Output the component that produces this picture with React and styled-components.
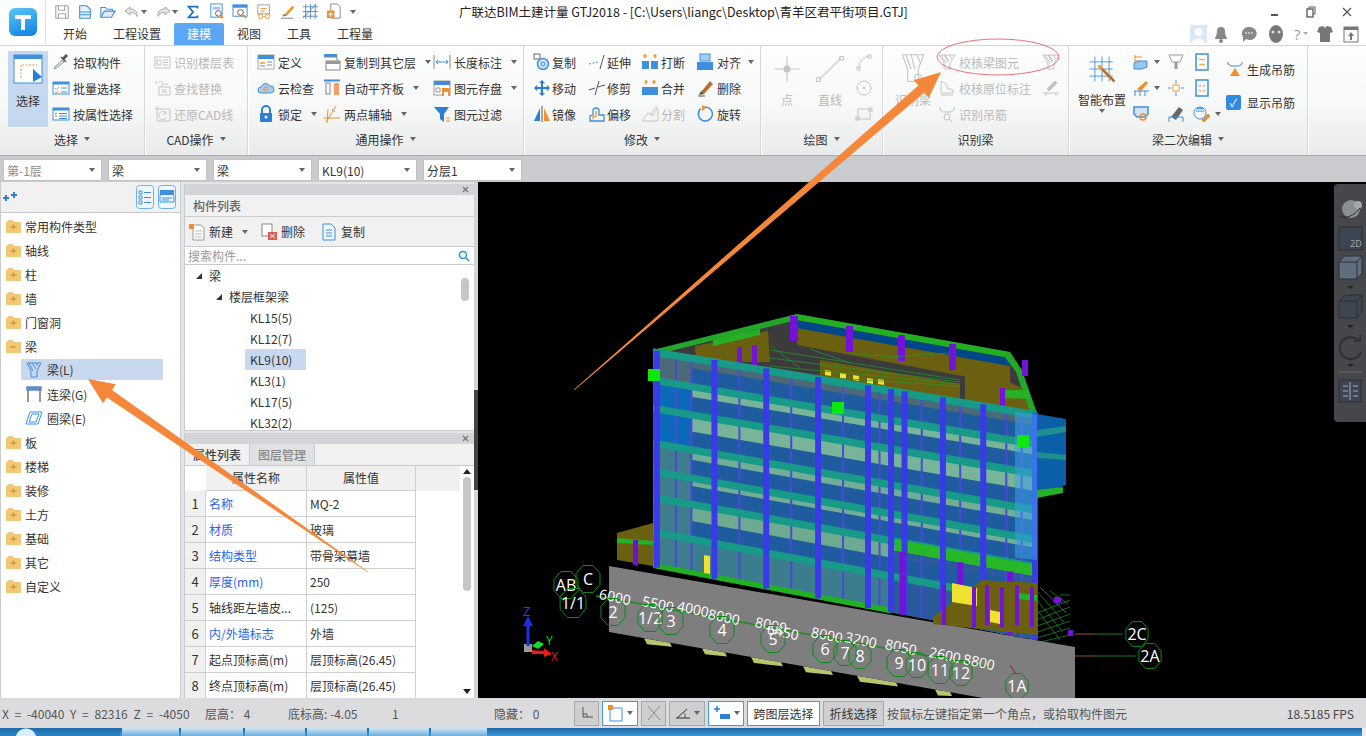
import React from 'react';
import styled, { createGlobalStyle } from 'styled-components';

const GlobalStyle = createGlobalStyle`
  html, body { margin: 0; padding: 0; height: 100%; overflow: hidden; }
  body { font-family: "Noto Sans CJK SC", "Liberation Sans", sans-serif; font-size: 12px; color: #333; }
  * { box-sizing: border-box; }
`;

const B = '#3f8fdc';
const O = '#f0902c';
const G = '#a9a9a9';
const L = '#c4c4c4';

// drawings for the small toolbar icons, all on an 18x18 grid
const icons = {
  save: <g fill="none" stroke={G} strokeWidth="1.3"><path d="M2 2h13l1 1v13H2z" /><path d="M5 2v5h7V2M5 16v-5h8v5" /></g>,
  page: <g fill="none" stroke={B} strokeWidth="1.2"><path d="M3 2h8l4 4v10H3z" fill="#e8f2fc" /><path d="M3 9h12M3 12h12" /></g>,
  open: <g fill="none" stroke={B} strokeWidth="1.2"><path d="M1 15V4h5l2 2h6v3" /><path d="M1 15l4-7h12l-4 7z" fill="#dcecfb" /></g>,
  undo: <path d="M7 4L2 8l5 4V9.500c4 0 6 1 7 4 .6-5-2-7.500-7-7.500z" fill="#e6e6e6" stroke={G} />,
  redo: <path d="M11 4l5 4-5 4V9.500c-4 0-6 1-7 4-.6-5 2-7.500 7-7.500z" fill="#e6e6e6" stroke={G} />,
  sigma: <path d="M14 5V3H4l5 6-5 6h10v-2" fill="none" stroke="#1c74bb" strokeWidth="2" />,
  calc: <g><rect x="3" y="1" width="12" height="14" fill="none" stroke={B} /><path d="M5 4h8v3H5z" fill={B} opacity=".5" /><circle cx="11" cy="11" r="3" fill="#fff" stroke="#555" /><path d="M13 13l3 3" stroke={O} strokeWidth="2" /></g>,
  view: <g><rect x="1" y="2" width="15" height="12" fill="#fff" stroke={B} /><path d="M1 2h15v3H1z" fill={B} /><circle cx="9" cy="10" r="3" fill="none" stroke="#555" /><path d="M11 12l4 4" stroke={O} strokeWidth="2" /></g>,
  glasses: <g fill="none" stroke={O}><rect x="2" y="1" width="13" height="10" stroke="#999" /><circle cx="5" cy="14" r="2.500" /><circle cx="13" cy="14" r="2.500" /><path d="M7.500 14h3M5 5h7M5 8h5" /></g>,
  brush: <g><path d="M7 11l8-9 2 2-8 9z" fill={O} /><path d="M2 16h14" stroke="#777" /><path d="M4 14c0-2 1-3 3-3l2 2c-1 1-3 1-5 1z" fill="#888" /></g>,
  grid: <path d="M1 4h16M1 9h16M1 14h16M4 1v16M9 1v16M14 1v16M1 16L15 1" fill="none" stroke="#5c8cbc" />,
  newdoc: <g><path d="M5 1h7l3 3v12H5z" fill="#fff" stroke="#888" /><rect x="1" y="8" width="8" height="8" fill={O} /><path d="M5 9.500v5M2.500 12h5" stroke="#fff" /></g>,
  newrow: <g><path d="M5 2h8l3 3v12H5z" fill="#fff" stroke="#999" /><path d="M7 8h7M7 11h7M7 14h7" stroke="#bbb" /><rect x="1" y="1" width="5" height="5" fill={O} /></g>,
  pick: <g><path d="M3 16l-1-1 8-8 2 2z" fill="#ddd" stroke="#999" /><path d="M10 5l2 2 4-4-2-2z" fill="#555" /><path d="M9 4l5 5" stroke="#555" strokeWidth="1.500" /></g>,
  batch: <g><rect x="1" y="3" width="16" height="12" fill="#fff" stroke={B} /><path d="M1 3h16v2.500H1z" fill={B} /><path d="M3 9l1.500 1.500L7 8M3 13l1.500 1 2-2" fill="none" stroke={O} /><path d="M9 9h6M9 13h6" stroke={B} /></g>,
  attr: <g><rect x="1" y="3" width="16" height="12" fill="#fff" stroke={B} /><path d="M1 3h16v2.500H1z" fill={B} /><path d="M7 8.500h8M7 11h8M7 13.500h8" stroke={B} /><path d="M3 8.500h2M3 11h2" stroke="#888" /></g>,
  layerTable: <g fill="none" stroke={L}><rect x="1" y="4" width="15" height="11" /><path d="M3 7h4v5H3zM9 7h5M9 9.500h5M9 12h5" /></g>,
  replace: <g fill="none" stroke={L}><path d="M2 3h7M2 3v3" strokeDasharray="2 1" /><rect x="5" y="8" width="11" height="8" /><path d="M8 8V5h6M8 11h5M8 13h5" /></g>,
  restore: <g fill="none" stroke={L}><path d="M3 1v15h13M1 4h15v12" /><path d="M12 8a4 4 0 1 0 0 5M12 6v3H9" /></g>,
  define: <g><rect x="1" y="2" width="16" height="14" fill="#fff" stroke="#aaa" /><path d="M1 2h16v4H1z" fill={B} /><path d="M3 9h5v2H3z" fill="#f3b44f" /><path d="M10 9h5M10 12h5M3 13h5" stroke="#888" /></g>,
  cloud: <g><path d="M4 14a3 3 0 0 1 0-6 5 5 0 0 1 9-1 3.500 3.500 0 0 1 1 7z" fill="#a9cdf0" stroke={B} /><circle cx="9" cy="10" r="2" fill="none" stroke={O} /></g>,
  lock: <g><path d="M5 8V5a4 4 0 0 1 8 0v3" fill="none" stroke="#2a7fd4" strokeWidth="2" /><rect x="3" y="8" width="12" height="9" rx="1" fill="#2a7fd4" /><circle cx="9" cy="12" r="1.500" fill="#fff" /></g>,
  copyLayer: <g><path d="M1 1h13v3H1z" fill={B} /><path d="M1 4h13v5" fill="none" stroke="#888" /><rect x="3" y="8" width="14" height="9" fill="#fff" stroke="#888" /><path d="M3 8h14v3H3z" fill="#999" /></g>,
  align: <g><path d="M1 1.500h16" stroke={B} strokeWidth="2" /><rect x="3" y="4" width="4" height="11" fill="none" stroke="#888" /><rect x="11" y="4" width="5" height="12" fill="#f59d6a" /></g>,
  twoPoint: <path d="M1 13h16M5 4l-1 14M13 1L3 17M9 4l3 3" fill="none" stroke={O} />,
  length: <g fill="none" stroke={B}><path d="M1 2v14M17 2v14" stroke="#888" /><path d="M3 9h12M5 7L3 9l2 2M13 7l2 2-2 2" /></g>,
  saveEl: <g><rect x="1" y="2" width="16" height="14" fill="#fff" stroke="#999" /><path d="M1 2h16v4H1z" fill={B} /><rect x="9" y="9" width="8" height="8" fill={O} /><rect x="11" y="13" width="4" height="4" fill="#fff" /><path d="M3 9h4v4H3z" fill="none" stroke="#999" /></g>,
  filter: <g><path d="M1 2h15l-5 7v8l-4-3V9z" fill="#2a7fd4" /><path d="M13 13h4M13 16h4" stroke={O} /></g>,
  copy: <g><rect x="1" y="1" width="6" height="5" fill="none" stroke="#666" /><circle cx="10" cy="11" r="5.500" fill="#cfe4f8" stroke={B} strokeWidth="1.500" /><circle cx="10" cy="11" r="2" fill="none" stroke={B} /></g>,
  extend: <g fill="none" stroke={B}><path d="M1 11l9-2" strokeDasharray="2 1.500" /><path d="M12 16l4-14" stroke="#555" /></g>,
  breakIt: <g><path d="M4 1v4M14 1v4" stroke={O} strokeWidth="1.500" /><path d="M2 3h4M12 3h4" stroke={O} /><rect x="1" y="8" width="7" height="8" fill={B} /><rect x="10" y="8" width="7" height="8" fill={B} /></g>,
  alignR: <g><rect x="4" y="1" width="10" height="7" fill="#a9cdf0" stroke={B} /><rect x="1" y="9" width="16" height="8" fill={B} /></g>,
  move: <path d="M9 1l3 3h-2v4h4V6l3 3-3 3v-2h-4v4h2l-3 3-3-3h2v-4H4v2L1 9l3-3v2h4V4H6z" fill="#2a7fd4" />,
  trim: <path d="M1 11l6-2M10 8l7-2M11 2L7 16" fill="none" stroke="#555" />,
  merge: <g><path d="M5 1v4M13 1v4" stroke={O} strokeWidth="1.500" /><path d="M3 3h4M11 3h4" stroke={O} /><rect x="1" y="8" width="16" height="8" fill={B} /></g>,
  erase: <g><path d="M2 17h7" stroke="#555" /><path d="M5 13l9-11 3 3-9 10z" fill="#b7702d" /><path d="M3 16l2-4 3 3z" fill="#555" /></g>,
  mirror: <g><path d="M1 16L7 3v13z" fill="#2a7fd4" /><path d="M9 1v16" stroke="#555" /><path d="M11 16V3l6 13z" fill={O} /></g>,
  offset: <g fill="none" stroke={B} strokeWidth="1.300"><path d="M2 16v-5l3-1V6a3 3 0 0 1 6 0v4h5v6z" /><path d="M5 14v-2l3-1V6" stroke={O} /></g>,
  split: <g fill="none" stroke={L}><path d="M1 16h16V5M1 16l6-8 5 3" /><path d="M10 9l5-7 2 1-5 7z" /></g>,
  rotate: <g><path d="M5 3.500A7 7 0 1 0 9 2" fill="none" stroke={B} strokeWidth="1.500" /><path d="M6 0l5 2.500L6 6z" fill={O} /></g>,
  pointSm: <g fill="none" stroke={L}><path d="M2 9h14M9 2v14" strokeWidth=".6" /><circle cx="9" cy="9" r="1.500" fill={L} /></g>,
  arc: <g fill="none" stroke={L}><path d="M4 15C4 9 8 4 14 3" /><rect x="2" y="14" width="3" height="3" /><rect x="13" y="2" width="3" height="3" /></g>,
  line: <g fill="none" stroke={L} strokeWidth=".6"><path d="M3 15L15 3" /><rect x="1.500" y="14" width="2" height="2" /><rect x="14.500" y="2" width="2" height="2" /></g>,
  circle: <g fill="none" stroke={L}><circle cx="9" cy="9" r="7" /><circle cx="9" cy="9" r="1" /></g>,
  rect: <g fill="none" stroke={L}><path d="M3 4h12v10H3z" /><rect x="1" y="12" width="3" height="3" /><rect x="14" y="3" width="3" height="3" /></g>,
  funnel: <g fill="none" stroke={L}><path d="M1 2h16l-5 8v6H6v-6z" /><path d="M3 2l5 8M7 2l4 6M11 2l3 4M6 2l4 7" /></g>,
  funnelBig: <g fill="none" stroke={L} strokeWidth=".6"><path d="M3 1h12l-3 8v6l2 2M6 9v7h6M3 1l3 8" /><path d="M5 1l3 8M8 1l2 8M11 1l2 4" /><circle cx="12" cy="14" r="2" /></g>,
  funnelB: <g fill="none" stroke={B}><path d="M2 2h14l-4 8v6H6v-6z" /><path d="M4 2l4 8M7 2l4 6M11 2l2 3" /></g>,
  lintel: <g fill="none" stroke="#777" strokeWidth="1.500"><path d="M3 5v12M15 5v12" /><path d="M2 2h14v3H2z" fill="#5c8cc0" stroke="#5c8cc0" /></g>,
  ring: <path d="M5 3h12l-4 12H1z M7 5h7l-3 8H4z" fill="none" stroke={B} />,
  mark: <g fill="none" stroke={L}><path d="M3 2l6 4v3l6 2v3H3z" /><path d="M3 16h12" /></g>,
  hang: <g fill="none" stroke={L}><path d="M2 2v3l3 2h8l3-2V2" /><circle cx="9" cy="12" r="3" /><path d="M11 14l3 3" /></g>,
  pen: <g fill="none" stroke={L}><path d="M5 10l8-8 2 2-8 8z" fill={L} /><path d="M1 14h16M4 17v-3M14 17v-3" /></g>,
  smartA: <g fill="none" stroke={B}><path d="M2 5h13M2 9h13M2 13h13M5 2v14M9 2v14M13 2v14" strokeWidth=".5" /><path d="M9 9l7 7" stroke="#b7702d" strokeWidth="1.500" /><path d="M7 7l2 2" stroke={O} strokeWidth="1.500" /></g>,
  rebar: <g><path d="M3 2v12M3 4h7M3 8h6" stroke={O} fill="none" /><path d="M2 10l5-2h8v6l-5 2H2z" fill="#9ac6ee" stroke={B} /></g>,
  sweep: <g><path d="M5 10l9-8 2 2-7 8z" fill={O} /><path d="M2 12h15M3 17v-5M8 17v-5M13 17v-5" stroke={B} fill="none" /></g>,
  beamSq: <g fill="none" stroke={B} strokeWidth="1.500"><path d="M2 2h14v7l-3 3H5l-3-3z" fill="#cfe4f8" /><circle cx="11" cy="12" r="3" stroke={O} /></g>,
  beamG: <g fill="none" stroke="#999"><path d="M2 2h14l-3 7H5z" /><path d="M9 9v7" strokeWidth="3" /></g>,
  star: <g fill="none" stroke={B}><path d="M9 1v3M9 14v3M1 9h3M14 9h3" /><circle cx="9" cy="9" r="3.500" stroke={O} /></g>,
  brush2: <g><path d="M4 12l8-10 4 3-7 10z" fill="#666" /><path d="M2 17v-5h14v5" fill="none" stroke={B} /></g>,
  wheel: <g fill="none" stroke={B}><circle cx="7" cy="8" r="6" /><path d="M3 6h8M3 3.500h8" /><path d="M9 15l6-6 2 2-6 6z" fill={O} stroke={O} /></g>,
  frameA: <g fill="none"><rect x="3" y="1" width="12" height="16" stroke={B} strokeWidth="1.500" /><path d="M6 6c2 1 4 1 6 0M6 12c2-1 4-1 6 0" stroke={O} /></g>,
  frameB: <g fill="none"><rect x="3" y="1" width="12" height="16" stroke={B} strokeWidth="1.500" /><path d="M7 6v1.500M11 6v1.500M7 11v1.500M11 11v1.500" stroke={O} strokeWidth="1.500" /></g>,
  genHang: <g><path d="M2 2v2l3 2h8l3-2V2" fill="none" stroke={B} /><path d="M9 8l5 8H4z" fill={O} /></g>,
  del: <g><rect x="2" y="1" width="10" height="12" fill="#fff" stroke="#888" /><rect x="8" y="9" width="9" height="8" fill="#e05a50" /><path d="M10 11l5 4M15 11l-5 4" stroke="#fff" /></g>,
  dup: <g fill="none" stroke={B}><path d="M3 1h8l4 4v12H3z" fill="#eef6fe" /><path d="M6 7h6M6 10h6M6 13h6" /></g>,
};

const Svg = styled.svg`
  flex-shrink: 0;
  display: block;
`;

const Icon = ({ name, size = 18 }) => (
  <Svg width={size} height={size} viewBox="0 0 18 18">{icons[name]}</Svg>
);

const CloseMark = () => (
  <Svg width="7" height="7" viewBox="0 0 7 7"><path d="M1 1l5 5M6 1L1 6" stroke="#777" strokeWidth="1.300" /></Svg>
);

const Caret = styled.i`
  display: inline-block;
  width: 0;
  height: 0;
  margin-left: ${p => p.$ml ?? 6}px;
  border-left: 3.5px solid transparent;
  border-right: 3.5px solid transparent;
  border-top: 4px solid #666;
  flex-shrink: 0;
`;

const Page = styled.div`
  position: relative;
  width: 1366px;
  height: 736px;
  display: flex;
  flex-direction: column;
  overflow: hidden;
  background: #dcdcde;
`;

/* title area */
const Head = styled.header`
  display: flex;
  flex-shrink: 0;
  height: 46px;
  background: #fff;
  border-bottom: 1px solid #d4d4d4;
`;
const LogoBox = styled.div`
  position: relative;
  width: 46px;
  padding: 8px 0 0 9px;
  border-right: 1px solid #e2e2e2;
`;
const Logo = styled.div`
  width: 28px;
  height: 28px;
  border-radius: 6px;
  background: linear-gradient(160deg, #59c8fa, #0f7fe0);
  display: flex;
  align-items: center;
  justify-content: center;
`;
const HeadMain = styled.div`
  flex: 1;
  display: flex;
  flex-direction: column;
`;
const TitleRow = styled.div`
  display: flex;
  align-items: center;
  height: 23px;
  padding-left: 8px;
`;
const Quick = styled.div`
  display: flex;
  align-items: center;
  width: 405px;
  gap: 7px;
`;
const Title = styled.div`
  font-size: 12.5px;
  color: #222;
  white-space: nowrap;
`;
const WinBtns = styled.div`
  display: flex;
  align-items: center;
  gap: 24px;
  margin-left: auto;
  padding-right: 13px;
`;
const TabRow = styled.div`
  display: flex;
  align-items: stretch;
  flex: 1;
  padding-left: 4px;
`;
const Tab = styled.div`
  padding: 0 13px;
  font-size: 12px;
  line-height: 22px;
  color: ${p => (p.$active ? '#fff' : '#333')};
  background: ${p => (p.$active ? '#5ba7f6' : 'transparent')};
  border-radius: 2px 2px 0 0;
`;
const UserIcons = styled.div`
  display: flex;
  align-items: center;
  gap: 9px;
  margin-left: auto;
  padding-right: 6px;
`;

/* ribbon */
const Ribbon = styled.div`
  display: flex;
  flex-shrink: 0;
  height: 109px;
  background: linear-gradient(#fdfdfd, #f7f8f8 55%, #e9ebeb);
`;
const Group = styled.section`
  width: ${p => p.$w}px;
  display: flex;
  flex-direction: column;
  border-right: 1px solid #d6d8d8;
  box-shadow: 1px 0 0 #fff;
`;
const GroupBody = styled.div`
  flex: 1;
  display: flex;
  padding: 3px 0 0 ${p => p.$pl ?? 9}px;
`;
const GroupLabel = styled.div`
  height: 30px;
  padding-bottom: 4px;
  display: flex;
  align-items: center;
  justify-content: center;
  color: #333;
`;
const Col = styled.div`
  width: ${p => p.$w}px;
  margin-left: ${p => p.$ml ?? 0}px;
  display: flex;
  flex-direction: column;
`;
const Tool = styled.div`
  height: 26px;
  display: flex;
  align-items: center;
  gap: ${p => p.$gap ?? 3}px;
  white-space: nowrap;
  color: ${p => (p.$off ? '#b9b9b9' : '#333')};
`;
const BigSelect = styled.div`
  width: 40px;
  height: 76px;
  margin: 2px 4px 0 0;
  background: #c5d8f0;
  display: flex;
  flex-direction: column;
  align-items: center;
  padding-top: 3px;
  gap: 8px;
`;
const BigTool = styled.div`
  width: ${p => p.$w}px;
  display: flex;
  flex-direction: column;
  align-items: center;
  margin-right: ${p => p.$mr ?? 0}px;
  padding-top: 4px;
  color: ${p => (p.$off ? '#b9b9b9' : '#333')};
  white-space: nowrap;
`;
const BigText = styled.div`
  margin-top: 6px;
  line-height: 18px;
`;
const Stack = styled.div`
  width: ${p => p.$w}px;
  display: flex;
  flex-direction: column;
  justify-content: center;
  gap: ${p => p.$gap ?? 0}px;
  padding-bottom: 5px;
`;
const Check = styled.span`
  width: 15px;
  height: 15px;
  border-radius: 2px;
  background: #2f8ae0;
  color: #fff;
  font-size: 11px;
  line-height: 15px;
  text-align: center;
  margin-right: 3px;
`;

/* selector row */
const Selectors = styled.div`
  display: flex;
  flex-shrink: 0;
  gap: 6px;
  height: 27px;
  padding: 3px 0 0 3px;
  background: #c9cbce;
  border-top: 1px solid #a9abae;
`;
const Select = styled.div`
  width: 99px;
  height: 22px;
  background: #fff;
  border: 1px solid #c2c2c2;
  padding: 0 6px 0 3px;
  display: flex;
  align-items: center;
  justify-content: space-between;
  color: ${p => (p.$dim ? '#8a8a8a' : '#333')};
`;

/* middle area */
const Main = styled.main`
  flex: 1;
  display: flex;
  min-height: 0;
  background: #e4e5e7;
`;
const Side = styled.aside`
  width: 181px;
  background: #fff;
  border: 1px solid #c9cbce;
  border-width: 0 1px 0 1px;
  display: flex;
  flex-direction: column;
`;
const SideHead = styled.div`
  height: 31px;
  display: flex;
  align-items: center;
  padding: 0 4px 0 2px;
  gap: 4px;
  background: #f1f1f2;
  border-bottom: 1px solid #c9cbce;
`;
const ViewBtn = styled.svg`
  display: block;
  margin-left: ${p => (p.$push ? 'auto' : 0)};
`;
const SideList = styled.div`
  padding-top: 1px;
`;
const SideRow = styled.div`
  height: ${p => (p.$sel ? 21 : 24)}px;
  margin-top: ${p => (p.$sel ? 1 : 0)}px;
  margin-bottom: ${p => (p.$sel ? 2 : 0)}px;
  display: flex;
  align-items: center;
  gap: 4px;
  padding-left: ${p => (p.$child ? 4 : 5)}px;
  width: ${p => (p.$child ? 142 : 178)}px;
  background: ${p => (p.$sel ? '#c7d8ef' : 'transparent')};
  margin-left: ${p => (p.$child ? 20 : 0)}px;
  white-space: nowrap;
`;
const Folder = ({ open }) => (
  <Svg width="15" height="13" viewBox="0 0 15 13">
    <path d="M0 2h1l1-2h5l1 2h7v11H0z" fill="#f0c877" />
    <path d={open ? 'M4 7h6' : 'M4.500 7h6M7.500 4.500v5'} stroke="#d79a2f" strokeWidth="1.500" />
  </Svg>
);

const Mid = styled.div`
  width: 290px;
  margin-left: 3px;
  display: flex;
  flex-direction: column;
  padding-top: 2px;
  background: #e4e5e7;
`;
const Pane = styled.div`
  display: flex;
  flex-direction: column;
  height: ${p => p.$h}px;
  background: #fff;
  margin-bottom: ${p => p.$mb ?? 0}px;
  overflow: hidden;
  border-left: 1px solid #c9cbce;
`;
const PaneBar = styled.div`
  height: 11px;
  flex-shrink: 0;
  background: #d2d4d8;
  display: flex;
  align-items: center;
  justify-content: flex-end;
  padding-right: 5px;
`;
const PaneTitle = styled.div`
  height: 22px;
  flex-shrink: 0;
  background: #f1f1f1;
  border-bottom: 1px solid #c9cbce;
  padding-left: 8px;
  line-height: 21px;
  font-weight: 500;
  color: #666;
`;
const PaneTools = styled.div`
  height: 30px;
  flex-shrink: 0;
  display: flex;
  align-items: center;
  background: #f1f1f1;
  border-bottom: 1px solid #c9cbce;
  padding-left: 3px;
`;
const PaneTool = styled.div`
  display: flex;
  align-items: center;
  gap: 3px;
  margin-right: ${p => p.$mr}px;
`;
const Search = styled.div`
  height: 18px;
  flex-shrink: 0;
  display: flex;
  align-items: center;
  justify-content: space-between;
  padding: 0 4px 0 3px;
  color: #999;
  border-bottom: 1px solid #c9cbce;
`;
const TreeWrap = styled.div`
  position: relative;
  flex: 1;
  overflow: hidden;
  border-bottom: 1px solid #c9cbce;
`;
const TreeRow = styled.div`
  height: 21px;
  display: flex;
  align-items: center;
  padding-left: ${p => p.$indent}px;
  gap: 7px;
`;
const TreeArrow = styled.i`
  width: 0;
  height: 0;
  border-bottom: 6px solid #333;
  border-left: 6px solid transparent;
`;
const TreeLabel = styled.span`
  min-width: 61px;
  padding: 0 5px;
  line-height: 21px;
  background: ${p => (p.$sel ? '#c7d8ef' : 'transparent')};
`;
const Thumb = styled.div`
  position: absolute;
  top: 13px;
  right: 5px;
  width: 8px;
  height: 23px;
  border-radius: 4px;
  background: #c6c6c6;
`;
const Tabs = styled.div`
  display: flex;
  height: 22px;
  flex-shrink: 0;
  background: #f1f1f1;
  border-bottom: 1px solid #c9cbce;
`;
const PTab = styled.div`
  width: 65px;
  text-align: center;
  line-height: 21px;
  color: ${p => (p.$active ? '#444' : '#888')};
  font-weight: 500;
  background: ${p => (p.$active ? '#f1f1f1' : '#e0e1e3')};
  border-right: 1px solid #c9cbce;
`;
const TableWrap = styled.div`
  position: relative;
  flex: 1;
  overflow: hidden;
  padding-right: 14px;
`;
const PropRow = styled.div`
  display: grid;
  grid-template-columns: 21px 101px 109px 1fr;
  height: ${p => p.$h ?? 26}px;
  line-height: ${p => (p.$h ?? 26) - 1}px;
  white-space: nowrap;
`;
const Cell = styled.div`
  padding-left: ${p => (p.$center ? 0 : 3)}px;
  text-align: ${p => (p.$center ? 'center' : 'left')};
  color: ${p => p.$color ?? '#333'};
  background: ${p => p.$bg ?? 'transparent'};
  border-bottom: 1px solid ${p => (p.$plain ? 'transparent' : '#cfcfcf')};
  border-right: 1px solid ${p => (p.$plain ? 'transparent' : '#cfcfcf')};
  font-size: ${p => p.$fs ?? 12}px;
  overflow: hidden;
`;
const VBar = styled.div`
  position: absolute;
  top: 0;
  right: 0;
  bottom: 0;
  width: 14px;
  display: flex;
  flex-direction: column;
  align-items: center;
  padding-top: 3px;
`;
const VThumb = styled.div`
  width: 8px;
  height: 114px;
  margin-top: 3px;
  background: #c6c6c6;
  border-radius: 4px;
`;
const UpArrow = styled.i`
  border-left: 4px solid transparent;
  border-right: 4px solid transparent;
  border-bottom: 5px solid #222;
`;
const DownArrow = styled.i`
  border-left: 4px solid transparent;
  border-right: 4px solid transparent;
  border-top: 5px solid #222;
  margin-top: auto;
  margin-bottom: 4px;
`;
const Splitter = styled.div`
  width: 4px;
  background: #d4d5d7;
  padding-top: 208px;
`;
const SplitHandle = styled.div`
  height: 100px;
  background: #3f434a;
`;

/* 3D view */
const Viewport = styled.div`
  position: relative;
  flex: 1;
  background: #000;
  overflow: hidden;
`;
const Strip = styled.div`
  position: absolute;
  top: 2px;
  right: 0;
  width: 32px;
  height: 238px;
  background: #45474a;
  border-radius: 4px 0 0 4px;
`;

/* status and task bar */
const Status = styled.footer`
  height: 30px;
  flex-shrink: 0;
  display: flex;
  align-items: center;
  background: #dcdcde;
  color: #555;
  padding-left: 2px;
  white-space: nowrap;
`;
const Stat = styled.span`
  width: ${p => p.$w}px;
  flex-shrink: 0;
  word-spacing: ${p => p.$ws ?? 0}px;
`;
const SBtn = styled.div`
  width: ${p => p.$w}px;
  height: 25px;
  margin-right: 3px;
  flex-shrink: 0;
  display: flex;
  align-items: center;
  justify-content: center;
  gap: 2px;
  color: #333;
  background: ${p => (p.$on ? '#fff' : '#cfcfd1')};
  border: 1px solid ${p => (p.$on ? '#3f9af0' : '#a8a8a8')};
`;
const Fps = styled.span`
  margin-left: auto;
  padding-right: 12px;
  color: #444;
`;
const Taskbar = styled.div`
  height: 8px;
  flex-shrink: 0;
  display: flex;
  background: linear-gradient(#1c6aa8, #3f97d6);
`;
const Task = styled.div`
  width: ${p => p.$w}px;
  margin-right: 2px;
  background: ${p => p.$bg ?? 'linear-gradient(#cfe4f4, #6cb0e0)'};
`;
const DesktopPeek = styled.div`
  width: 4px;
  margin-left: auto;
  background: #e8eef4;
`;

const Overlay = styled.svg`
  position: absolute;
  inset: 0;
  pointer-events: none;
`;

// long thin wedge that ends in an arrow head, like the ones drawn by hand on the screenshot
function wedge(x0, y0, x1, y1, w, head, len) {
  const d = Math.hypot(x1 - x0, y1 - y0);
  const ux = (x1 - x0) / d, uy = (y1 - y0) / d;
  const nx = -uy, ny = ux;
  const bx = x1 - ux * len, by = y1 - uy * len;
  const pts = [
    [x0 + nx * 0.4, y0 + ny * 0.4],
    [bx + nx * w / 2, by + ny * w / 2],
    [bx + nx * head / 2, by + ny * head / 2],
    [x1, y1],
    [bx - nx * head / 2, by - ny * head / 2],
    [bx - nx * w / 2, by - ny * w / 2],
    [x0 - nx * 0.4, y0 - ny * 0.4],
  ];
  return pts.map(p => p.map(v => v.toFixed(1)).join(',')).join(' ');
}

const octa = (cx, cy, r) => Array.from({ length: 8 }, (_, i) => {
  const a = Math.PI / 8 + i * Math.PI / 4;
  return `${(cx + Math.cos(a) * r).toFixed(1)},${(cy + Math.sin(a) * r * 1.12).toFixed(1)}`;
}).join(' ');

const lerp = (a, b, t) => a + (b - a) * t;
const fx = u => 653 + 384 * u;
const fy = (u, v) => lerp(350 + 63 * u, 567 + 73 * u, v);
const quad = (u0, v0, u1, v1) =>
  `${fx(u0)},${fy(u0, v0)} ${fx(u1)},${fy(u1, v0)} ${fx(u1)},${fy(u1, v1)} ${fx(u0)},${fy(u0, v1)}`;

const levels = [0, 0.13, 0.26, 0.42, 0.55, 0.67, 0.83, 1];
const floorFill = ['#4b6a78', '#78b49a', '#78b49a', '#72ad98', '#72ad98', '#6eaa92', '#3b7d8e'];
const bigCols = [0.01, 0.16, 0.295, 0.43, 0.56, 0.62, 0.655, 0.755, 0.86, 0.995];
const thinCols = [0.06, 0.1, 0.225, 0.36, 0.495, 0.59, 0.7, 0.8, 0.92, 0.96];
const axes = [
  ['AB', 566, 585, 13], ['C', 588, 579, 13], ['1/1', 573, 603, 14], ['2', 613, 612, 13], ['1/2', 650, 618, 13],
  ['3', 671, 621, 13], ['4', 722, 630, 13], ['5', 773, 639, 13], ['6', 825, 649, 13], ['7', 845, 653, 12],
  ['8', 860, 656, 12], ['9', 899, 663, 13], ['10', 917, 665, 12], ['11', 940, 670, 13], ['12', 961, 673, 12],
  ['1A', 1017, 686, 12], ['2C', 1137, 634, 12], ['2A', 1150, 656, 12],
];
const dims = [
  ['6000', 614, 602], ['5500', 657, 609], ['4000', 692, 614], ['8000', 723, 622], ['8000', 770, 630], ['6450', 782, 637],
  ['8000', 826, 640], ['3200', 860, 645], ['8050', 900, 652], ['2600', 944, 660], ['8800', 978, 667],
];
const feet = [[644, 26], [702, 23], [751, 30], [803, 28], [857, 39], [935, 15]];
const slabBottom = x => 632 + (x - 609) * 0.176;

const Building = () => (
  <svg width="888" height="516" viewBox="478 182 888 516" style={{ display: 'block' }}>
    {/* foundation slab */}
    {feet.map(([x, w], i) => (
      <polygon key={i} points={`${x},${slabBottom(x)} ${x + w},${slabBottom(x + w)} ${x + w + 2},${slabBottom(x + w) + 4} ${x + 3},${slabBottom(x) + 6}`} fill="#b9c46f" />
    ))}
    {[0, 1, 2, 3, 4, 5].map(i => (
      <path key={i} d={`M${1010 + i * 10} ${575 + i * 4}L${1060 + i * 2} ${640 - i * 9}M${990 + i * 10} ${632 + i * 2}L1070 ${600 + i * 7}`} stroke="#1f9a2a" strokeWidth=".7" />
    ))}
    <polygon points="609,566 1075,647 1075,698 983,698 609,632" fill="#7e7e7e" />

    {/* small block at the left */}
    <polygon points="617,533 653,523 653,566 617,560" fill="#6b5f10" />
    <polygon points="617,538 653,541 653,545 617,543" fill="#25b025" />
    <polygon points="633,540 638,540 638,566 633,565" fill="#6a12d8" />

    {/* roof and back wall */}
    <polygon points="653,350 797,314 1010,352 1037,413" fill="#3b3b3b" />
    <polygon points="797,316 1010,354 1010,385 797,345" fill="#6b5f10" />
    <polygon points="797,320 1010,358 1010,366 797,328" fill="#00468a" />
    <polygon points="797,314 1010,352 1010,358 797,320" fill="#21b021" />
    <polygon points="653,350 797,314 797,320 662,353" fill="#21a828" />
    <polygon points="1010,352 1022,370 1037,413 1030,413 1016,372 1004,356" fill="#21a828" />
    <polygon points="695,346 768,331 770,362 696,362" fill="#6b5f10" />
    <polygon points="713,340 760,329 760,335 713,346" fill="#25b025" />
    <polygon points="820,360 960,384 960,404 820,380" fill="#6b5f10" />
    <polygon points="965,362 1022,388 1030,412 965,402" fill="#6b5f10" />
    <polygon points="1000,390 1028,390 1030,399 1000,398" fill="#25b025" />
    {[[790, 316, 8, 25], [846, 326, 7, 26], [898, 335, 7, 26], [949, 344, 7, 26], [737, 347, 5, 18], [752, 345, 5, 22], [1000, 388, 5, 20], [1022, 360, 6, 16]].map(([x, y, w, h], i) => (
      <rect key={i} x={x} y={y} width={w} height={h} fill="#7312d8" />
    ))}
    {[[825, 370], [840, 373], [853, 375], [867, 378], [878, 379]].map(([x, y], i) => (
      <polygon key={i} points={`${x},${y} ${x + 6},${y + 1} ${x + 6},${y + 6} ${x},${y + 5}`} fill="#efe22c" />
    ))}
    {[0, 1, 2, 3].map(i => (
      <path key={i} d={`M${770 + i * 40} ${345 + i * 4}L${800 + i * 50} ${368 - i * 5}M770 ${350 + i * 8}L960 ${380 + i * 2}`} stroke="#1f9a2a" strokeWidth=".7" />
    ))}

    {/* front facade */}
    {floorFill.map((f, i) => <polygon key={i} points={quad(0, levels[i], 1, levels[i + 1])} fill={f} />)}
    <polygon points={quad(0, 0.13, 0.1, 0.42)} fill="#0c68b8" />
    <polygon points={quad(0, 0.42, 0.1, 1)} fill="#3f7d8e" />
    <polygon points={quad(0.62, 0.72, 1, 1)} fill="#2a5a9c" />
    {levels.slice(1, 7).map((v, i) => <polygon key={i} points={quad(0.1, v - 0.075, 1, v)} fill="#1f5c9f" />)}
    {thinCols.map((u, i) => <polygon key={i} points={`${fx(u) - 1},${fy(u, 0.02)} ${fx(u) + 1},${fy(u, 0.02)} ${fx(u) + 1},${fy(u, 1)} ${fx(u) - 1},${fy(u, 1)}`} fill="#4a4ad6" />)}
    {[0, ...levels.slice(1, 7)].map((v, i) => <polygon key={i} points={quad(0, v - 0.008, 1, v + 0.026)} fill="#179a88" />)}
    <polygon points={quad(0, 0.98, 0.62, 1.005)} fill="#22b022" />
    <polygon points={quad(0.63, 0.67, 1, 0.72)} fill="#27b827" />
    {bigCols.map((u, i) => <polygon key={i} points={`${fx(u) - 3},${fy(u, 0)} ${fx(u) + 3},${fy(u, 0)} ${fx(u) + 3},${fy(u, 1)} ${fx(u) - 3},${fy(u, 1)}`} fill="#3a3ae8" />)}
    {[0.65, 0.8, 0.93].map((u, i) => <polygon key={i} points={`${fx(u) - 3},${fy(u, 0.72)} ${fx(u) + 3},${fy(u, 0.72)} ${fx(u) + 3},${fy(u, 1)} ${fx(u) - 3},${fy(u, 1)}`} fill="#7312d8" />)}
    <polygon points="704,555 710,556 710,574 704,573" fill="#efe22c" />

    {/* glass box on the right */}
    <polygon points="1037,414 1066,419 1066,485 1037,497" fill="#0a5fa8" />
    <polygon points="1037,430 1066,426 1066,432 1037,437" fill="#1e8f8f" />
    <polygon points="1037,452 1066,455 1066,460 1037,458" fill="#1e8f8f" />
    <polygon points="1037,490 1063,487 1063,493 1037,498" fill="#25b025" />
    <polygon points="1015,412 1037,414 1037,560 1015,558" fill="#3ca0e6" opacity=".55" />

    {/* lower right corner */}
    <polygon points="933,617 982,580 1037,583 1038,635 933,624" fill="#6b5f10" />
    <polygon points="952,583 977,588 977,606 952,602" fill="#efe22c" />
    <polygon points="990,610 1000,612 1000,624 990,622" fill="#efe22c" />
    <polygon points="1017,593 1037,595 1037,601 1017,599" fill="#25b025" />
    {[942, 972, 985, 1000, 1015, 1030].map((x, i) => <rect key={i} x={x} y={585 + (i % 2) * 2} width="4" height="40" fill="#7312d8" />)}
    <rect x="1068" y="630" width="5" height="6" fill="#7312d8" />
    <rect x="1054" y="597" width="7" height="6" fill="#7312d8" />

    {/* axis lines, dimensions, bubbles */}
    <path d="M596 596L990 667" stroke="#1d8a25" strokeWidth="1.500" />
    <path d="M1075 634H1123" stroke="#1d7a25" />
    <path d="M1075 656H1136" stroke="#1d7a25" />
    <path d="M1075 634H1095M1075 656H1095" stroke="#8c1414" />
    <path d="M1010 665L1016 674" stroke="#b01818" />
    {dims.map(([t, x, y], i) => <text key={i} x={x} y={y} transform={`rotate(12 ${x} ${y})`} fontFamily="Open Sans" fontSize="14" fill="#fff" textAnchor="middle">{t}</text>)}
    {axes.map(([t, x, y, r], i) => (
      <g key={i}>
        <polygon points={octa(x, y, r)} fill="none" stroke="#0d8a18" />
        <text x={x} y={y + 6} fontFamily="Open Sans" fontSize="16" fill="#fff" textAnchor="middle">{t}</text>
      </g>
    ))}

    {/* coordinate gizmo */}
    <rect x="524" y="644" width="8" height="8" fill="#999" />
    <path d="M528 646V624" stroke="#1a2fe8" strokeWidth="3" />
    <polygon points="523,626 533,626 528,616" fill="#1a2fe8" />
    <polygon points="532,650 544,651 544,648 552,654 544,657 544,654 532,654" fill="#e81c1c" />
    <polygon points="532,646 538,641 544,644 538,649" fill="#16d92a" />
    <text x="523" y="616" fontFamily="Open Sans" fontSize="13" fill="#2b3df0">Z</text>
    <text x="546" y="645" fontFamily="Open Sans" fontSize="12" fill="#16d92a">Y</text>
    <text x="551" y="661" fontFamily="Open Sans" fontSize="12" fill="#e81c1c">X</text>

    {/* green grip points */}
    {[[648, 369], [832, 402], [1017, 435]].map(([x, y], i) => <rect key={i} x={x} y={y} width="12" height="12" fill="#0fe80f" />)}
  </svg>
);

const ViewStrip = () => (
  <Strip>
    <svg width="32" height="238" viewBox="1334 182 32 238" fill="none" stroke="#2d3036">
      <circle cx="1351" cy="207" r="9" fill="#8b8e92" stroke="none" />
      <circle cx="1358" cy="203" r="4" fill="#a4a7aa" stroke="none" />
      <path d="M1340 214c6 3 14 0 20-8" />
      <rect x="1339" y="225" width="23" height="23" fill="#3c4550" />
      <text x="1350" y="245" fontFamily="Open Sans" fontSize="9" fill="#aab" stroke="none">2D</text>
      <path d="M1339 260h18v17h-18zM1339 260l6-6h17v17l-5 6M1357 260l5-6" fill="#5f6e7c" />
      <path d="M1339 299h18v17h-18zM1339 299l6-6h17v17l-5 6M1357 299l5-6" fill="#3c4550" />
      <path d="M1359 339a11 11 0 1 0 2 11" strokeWidth="2" />
      <path d="M1354 339h6v-6" strokeWidth="1.500" />
      <path d="M1339 370h23" stroke="#6a6c70" />
      <rect x="1339" y="378" width="22" height="22" fill="#3c4550" />
      <path d="M1343 384h5M1343 389h5M1343 394h5M1353 384h5M1353 389h5M1353 394h5M1350 380v18" stroke="#aab" />
      <path d="M1347 284h7l-3.500 3zM1347 323h7l-3.500 3zM1347 362h7l-3.500 3z" fill="#222" stroke="none" />
    </svg>
  </Strip>
);

const sideItems = ['常用构件类型', '轴线', '柱', '墙', '门窗洞'];
const sideRest = ['板', '楼梯', '装修', '土方', '基础', '其它', '自定义'];
const treeLeaves = ['KL15(5)', 'KL12(7)', 'KL9(10)', 'KL3(1)', 'KL17(5)', 'KL32(2)'];
const BLUE = '#2b62ea';
const props = [
  ['名称', 'MQ-2', BLUE], ['材质', '玻璃', BLUE], ['结构类型', '带骨架幕墙', BLUE], ['厚度(mm)', '250', BLUE],
  ['轴线距左墙皮...', '(125)'], ['内/外墙标志', '外墙', BLUE], ['起点顶标高(m)', '层顶标高(26.45)'], ['终点顶标高(m)', '层顶标高(26.45)'],
];

const ToolItem = ({ icon, text, off, caret, ml, gap }) => (
  <Tool $off={off} $gap={gap}>
    <Icon name={icon} />
    {text}
    {caret && <Caret $ml={ml} />}
  </Tool>
);

const IconStack = ({ w, list }) => (
  <Col $w={w}>
    {list.map(([name, caret], i) => (
      <Tool key={i}><Icon name={name} />{caret && <Caret $ml={1} />}</Tool>
    ))}
  </Col>
);

export default function App() {
  return (
    <Page>
      <GlobalStyle />
      <Head>
        <LogoBox>
          <Logo>
            <svg width="20" height="20" viewBox="0 0 20 20"><path d="M2 3h16v4h-6v11H8V7H2z" fill="#fff" /></svg>
          </Logo>
        </LogoBox>
        <HeadMain>
          <TitleRow>
            <Quick>
              <Icon name="save" size={16} />
              <Icon name="page" size={16} />
              <Icon name="open" size={16} />
              <Icon name="undo" size={18} /><Caret $ml={-7} />
              <Icon name="redo" size={18} /><Caret $ml={-7} />
              <Icon name="sigma" size={16} />
              <Icon name="calc" size={17} />
              <Icon name="view" size={17} />
              <Icon name="glasses" size={16} />
              <Icon name="brush" size={16} />
              <Icon name="grid" size={17} />
              <Icon name="newdoc" size={17} />
              <Caret $ml={0} />
            </Quick>
            <Title>广联达BIM土建计量 GTJ2018 - [C:\Users\liangc\Desktop\青羊区君平街项目.GTJ]</Title>
            <WinBtns>
              <svg width="12" height="12" viewBox="0 0 12 12"><path d="M2 9h7" stroke="#555" strokeWidth="2" /></svg>
              <svg width="12" height="12" viewBox="0 0 12 12" fill="none" stroke="#555"><path d="M4 3V1h6v7H8" /><rect x="2" y="3" width="6" height="8" strokeWidth="1.300" /></svg>
              <svg width="12" height="12" viewBox="0 0 12 12"><path d="M2 2l8 8M10 2l-8 8" stroke="#555" strokeWidth="1.300" /></svg>
            </WinBtns>
          </TitleRow>
          <TabRow>
            <Tab>开始</Tab>
            <Tab>工程设置</Tab>
            <Tab $active>建模</Tab>
            <Tab>视图</Tab>
            <Tab>工具</Tab>
            <Tab>工程量</Tab>
            <UserIcons>
              <svg width="170" height="20" viewBox="0 0 170 20">
                <rect x="0" y="1" width="17" height="18" fill="#d7e8f8" />
                <circle cx="8.500" cy="8" r="4" fill="#fff" />
                <path d="M2 19c1-6 12-6 13 0z" fill="#fff" />
                <path d="M31 3a4 4 0 0 1 4 4c0 5 2 6 2 8H25c0-2 2-3 2-8a4 4 0 0 1 4-4z" fill="#888" />
                <circle cx="31" cy="17" r="2" fill="#888" />
                <path d="M59 3a7 6.500 0 1 1-3 12l-3 3v-5a7 6.500 0 0 1 6-10z" fill="#888" />
                <path d="M55 9h2M58 9h2M61 9h2" stroke="#fff" />
                <ellipse cx="86" cy="10" rx="7" ry="9" fill="#777" />
                <circle cx="83" cy="8" r="1.500" fill="#ddd" /><circle cx="89" cy="8" r="1.500" fill="#ddd" />
                <text x="104" y="16" fontFamily="Open Sans" fontSize="15" fill="#999">?</text>
                <path d="M113 8h5l-2.500 3z" fill="#aaa" />
                <path d="M129 3l4-1 2 2 2-2 4 1 2 5-3 1v9h-10V9l-3-1z" fill="#777" />
                <rect x="154" y="3" width="14" height="15" fill="none" stroke="#777" />
                <path d="M154 3h14v3h-14zM161 8l3 4h-2v4h-2v-4h-2z" fill="#777" />
              </svg>
            </UserIcons>
          </TabRow>
        </HeadMain>
      </Head>

      <Ribbon>
        <Group $w={145}>
          <GroupBody $pl={8}>
            <BigSelect>
              <svg width="30" height="30" viewBox="0 0 30 30">
                <rect x="1" y="1" width="28" height="28" fill="#fff" stroke="#3f8fdc" />
                <path d="M1 1h28v4H1z" fill="#3f8fdc" />
                <path d="M8 24V11h16" fill="none" stroke={O} strokeDasharray="2 1.500" />
                <path d="M20 15l9 8-9 5z" fill="#2a7fd4" />
              </svg>
              选择
            </BigSelect>
            <Col>
              <ToolItem icon="pick" text="拾取构件" />
              <ToolItem icon="batch" text="批量选择" />
              <ToolItem icon="attr" text="按属性选择" />
            </Col>
          </GroupBody>
          <GroupLabel>选择<Caret /></GroupLabel>
        </Group>

        <Group $w={103}>
          <GroupBody>
            <Col>
              <ToolItem off icon="layerTable" text="识别楼层表" gap={2} />
              <ToolItem off icon="replace" text="查找替换" gap={2} />
              <ToolItem off icon="restore" text="还原CAD线" gap={2} />
            </Col>
          </GroupBody>
          <GroupLabel>CAD操作<Caret /></GroupLabel>
        </Group>

        <Group $w={276}>
          <GroupBody>
            <Col $w={66}>
              <ToolItem icon="define" text="定义" />
              <ToolItem icon="cloud" text="云检查" />
              <ToolItem icon="lock" text="锁定" caret />
            </Col>
            <Col $w={110}>
              <ToolItem icon="copyLayer" text="复制到其它层" caret />
              <ToolItem icon="align" text="自动平齐板" caret />
              <ToolItem icon="twoPoint" text="两点辅轴" caret />
            </Col>
            <Col>
              <ToolItem icon="length" text="长度标注" caret />
              <ToolItem icon="saveEl" text="图元存盘" caret />
              <ToolItem icon="filter" text="图元过滤" />
            </Col>
          </GroupBody>
          <GroupLabel>通用操作<Caret /></GroupLabel>
        </Group>

        <Group $w={237}>
          <GroupBody>
            <Col $w={55}>
              <ToolItem icon="copy" text="复制" gap={1} />
              <ToolItem icon="move" text="移动" gap={1} />
              <ToolItem icon="mirror" text="镜像" gap={1} />
            </Col>
            <Col $w={53}>
              <ToolItem icon="extend" text="延伸" gap={1} />
              <ToolItem icon="trim" text="修剪" gap={1} />
              <ToolItem icon="offset" text="偏移" gap={1} />
            </Col>
            <Col $w={55}>
              <ToolItem icon="breakIt" text="打断" gap={2} />
              <ToolItem icon="merge" text="合并" gap={2} />
              <ToolItem off icon="split" text="分割" gap={2} />
            </Col>
            <Col>
              <ToolItem icon="alignR" text="对齐" caret ml={4} />
              <ToolItem icon="erase" text="删除" />
              <ToolItem icon="rotate" text="旋转" />
            </Col>
          </GroupBody>
          <GroupLabel>修改<Caret /></GroupLabel>
        </Group>

        <Group $w={122}>
          <GroupBody>
            <BigTool $w={34} $mr={8} $off><Icon name="pointSm" size={32} /><BigText>点</BigText></BigTool>
            <BigTool $w={36} $mr={7} $off><Icon name="line" size={32} /><BigText>直线</BigText></BigTool>
            <IconStack w={20} list={[['arc'], ['circle'], ['rect']]} />
          </GroupBody>
          <GroupLabel>绘图<Caret /></GroupLabel>
        </Group>

        <Group $w={186}>
          <GroupBody $pl={10}>
            <BigTool $w={40} $mr={5} $off><Icon name="funnelBig" size={32} /><BigText>识别梁</BigText></BigTool>
            <Col $w={104}>
              <ToolItem off icon="funnel" text="校核梁图元" />
              <ToolItem off icon="mark" text="校核原位标注" />
              <ToolItem off icon="hang" text="识别吊筋" />
            </Col>
            <IconStack w={20} list={[['funnel'], ['pen']]} />
          </GroupBody>
          <GroupLabel>识别梁</GroupLabel>
        </Group>

        <Group $w={239}>
          <GroupBody $pl={8}>
            <BigTool $w={50} $mr={5}>
              <Icon name="smartA" size={32} />
              <BigText>智能布置</BigText>
              <Caret $ml={0} />
            </BigTool>
            <IconStack w={35} list={[['rebar', true], ['sweep', true], ['beamSq']]} />
            <IconStack w={26} list={[['beamG'], ['star'], ['brush2']]} />
            <IconStack w={33} list={[['frameA'], ['frameB'], ['wheel', true]]} />
            <Stack $w={72} $gap={7}>
              <ToolItem icon="genHang" text="生成吊筋" />
              <Tool><Check>✓</Check>显示吊筋</Tool>
            </Stack>
          </GroupBody>
          <GroupLabel>梁二次编辑<Caret /></GroupLabel>
        </Group>
      </Ribbon>

      <Selectors>
        <Select $dim>第-1层<Caret /></Select>
        <Select>梁<Caret /></Select>
        <Select>梁<Caret /></Select>
        <Select>KL9(10)<Caret /></Select>
        <Select>分层1<Caret /></Select>
      </Selectors>

      <Main>
        <Side>
          <SideHead>
            <svg width="14" height="10" viewBox="0 0 14 10"><path d="M0 6h6M3 3v6M8 3h6M11 0v6" stroke="#2a7fd4" strokeWidth="2" /></svg>
            <ViewBtn $push width="18" height="24" viewBox="0 0 18 24" fill="none">
              <rect x=".5" y=".5" width="17" height="23" rx="3" fill="#eef6fe" stroke="#6db0f0" />
              <path d="M3 6h3v3H3zM3 11h3v3H3zM3 16h3v3H3z" stroke="#3f8fdc" />
              <path d="M8 7.500h7M8 12.500h7M8 17.500h7" stroke="#3f8fdc" />
            </ViewBtn>
            <ViewBtn width="18" height="24" viewBox="0 0 18 24" fill="none">
              <rect x=".5" y=".5" width="17" height="23" rx="3" fill="#eef6fe" stroke="#6db0f0" />
              <path d="M2 5h14v5H2z" fill="#3f8fdc" />
              <path d="M2 10v7h14v-7M4 13h10M4 15h7" stroke="#3f8fdc" />
            </ViewBtn>
          </SideHead>
          <SideList>
            {sideItems.map(t => <SideRow key={t}><Folder />{t}</SideRow>)}
            <SideRow><Folder open />梁</SideRow>
            <SideRow $child $sel><Icon name="funnelB" size={18} />梁(L)</SideRow>
            <SideRow $child><Icon name="lintel" size={18} />连梁(G)</SideRow>
            <SideRow $child><Icon name="ring" size={18} />圈梁(E)</SideRow>
            {sideRest.map(t => <SideRow key={t}><Folder />{t}</SideRow>)}
          </SideList>
        </Side>

        <Mid>
          <Pane $h={247} $mb={2}>
            <PaneBar><CloseMark /></PaneBar>
            <PaneTitle>构件列表</PaneTitle>
            <PaneTools>
              <PaneTool $mr={12}><Icon name="newrow" />新建<Caret /></PaneTool>
              <PaneTool $mr={15}><Icon name="del" />删除</PaneTool>
              <PaneTool $mr={0}><Icon name="dup" />复制</PaneTool>
            </PaneTools>
            <Search>
              搜索构件...
              <svg width="12" height="12" viewBox="0 0 12 12" fill="none" stroke="#2a8fd4" strokeWidth="1.500"><circle cx="5" cy="5" r="3.500" /><path d="M8 8l3 3" /></svg>
            </Search>
            <TreeWrap>
              <TreeRow $indent={11}><TreeArrow />梁</TreeRow>
              <TreeRow $indent={31}><TreeArrow />楼层框架梁</TreeRow>
              {treeLeaves.map(t => (
                <TreeRow key={t} $indent={60}><TreeLabel $sel={t === 'KL9(10)'}>{t}</TreeLabel></TreeRow>
              ))}
              <Thumb />
            </TreeWrap>
          </Pane>
          <Pane $h={265}>
            <PaneBar><CloseMark /></PaneBar>
            <Tabs>
              <PTab $active>属性列表</PTab>
              <PTab>图层管理</PTab>
            </Tabs>
            <TableWrap>
              <PropRow $h={25}>
                <Cell $plain />
                <Cell $center $bg="#f0f0f0">属性名称</Cell>
                <Cell $center $bg="#f0f0f0">属性值</Cell>
                <Cell $plain $bg="#f0f0f0" />
              </PropRow>
              {props.map(([k, v, c], i) => (
                <PropRow key={k}>
                  <Cell $center $bg="#f0f0f0" $fs={13}>{i + 1}</Cell>
                  <Cell $color={c}>{k}</Cell>
                  <Cell>{v}</Cell>
                  <Cell $plain />
                </PropRow>
              ))}
              <VBar><UpArrow /><VThumb /><DownArrow /></VBar>
            </TableWrap>
          </Pane>
        </Mid>

        <Splitter><SplitHandle /></Splitter>

        <Viewport>
          <Building />
          <ViewStrip />
        </Viewport>
      </Main>

      <Status>
        <Stat $w={203} $ws={3}>X = -40040 Y = 82316 Z = -4050</Stat>
        <Stat $w={83}>层高： 4</Stat>
        <Stat $w={104}>底标高: -4.05</Stat>
        <Stat $w={102}>1</Stat>
        <Stat $w={80}>隐藏： 0</Stat>
        <SBtn $w={25}>
          <svg width="14" height="14" viewBox="0 0 14 14"><path d="M3 1v10h10M3 8h4v3" fill="none" stroke="#555" /></svg>
        </SBtn>
        <SBtn $w={36} $on>
          <svg width="16" height="18" viewBox="0 0 16 18"><rect x="2" y="4" width="12" height="13" fill="none" stroke="#3f8fdc" /><rect x="0" y="1" width="5" height="5" fill={O} /></svg>
          <Caret $ml={1} />
        </SBtn>
        <SBtn $w={25}>
          <svg width="16" height="18" viewBox="0 0 16 18"><path d="M2 2l12 14M14 2L2 16" stroke="#888" fill="none" /></svg>
        </SBtn>
        <SBtn $w={36}>
          <svg width="16" height="16" viewBox="0 0 16 16"><path d="M1 13h14M2 13l10-9" stroke="#333" fill="none" /><path d="M8 7a5 5 0 0 1 2 6" stroke="#555" fill="none" /></svg>
          <Caret $ml={1} />
        </SBtn>
        <SBtn $w={36} $on>
          <svg width="18" height="18" viewBox="0 0 18 18"><path d="M4 2v6M1 5h6" stroke="#2a7fd4" strokeWidth="1.500" /><rect x="7" y="10" width="10" height="5" fill="#2a7fd4" /></svg>
          <Caret $ml={1} />
        </SBtn>
        <SBtn $w={73} $on>跨图层选择</SBtn>
        <SBtn $w={61}>折线选择</SBtn>
        按鼠标左键指定第一个角点，或拾取构件图元
        <Fps>18.5185 FPS</Fps>
      </Status>

      <Taskbar>
        <Task $w={120} $bg="radial-gradient(circle at 26px 11px, #d8eefc 0 10px, transparent 11px), linear-gradient(#1c6aa8, #2d86c6)" />
        <Task $w={57} />
        <Task $w={62} />
        <Task $w={60} />
        <Task $w={60} />
        <Task $w={60} />
        <Task $w={56} />
        <DesktopPeek />
      </Taskbar>

      <Overlay width="1366" height="736" viewBox="0 0 1366 736">
        <polygon points={wedge(574, 390, 941, 72, 9, 23, 26)} fill="#f5873a" />
        <polygon points={wedge(368, 572, 88, 379, 9, 23, 26)} fill="#f5873a" />
        <ellipse cx="998" cy="57" rx="61" ry="18" fill="none" stroke="#e8737a" />
      </Overlay>
    </Page>
  );
}
